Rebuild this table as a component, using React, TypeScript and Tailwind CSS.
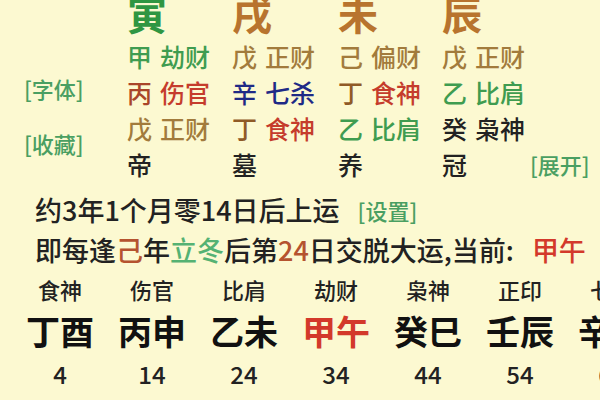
const G = "text-[#3f9c50]";
const B = "text-[#a27b3c]";
const BR = "text-[#8f5a27]";
const R = "text-[#c53c2c]";
const RB = "text-[#a9452a]";
const BL = "text-[#1f2a86]";
const K = "text-[#222222]";
const LINK = "text-[#4a9f62]";

type Cell = [string, string, string, string];

const pillars = [
  { zhi: "寅", color: "text-[#2f9642]", state: "帝" },
  { zhi: "戌", color: "text-[#b8742e]", state: "墓" },
  { zhi: "未", color: "text-[#b8742e]", state: "养" },
  { zhi: "辰", color: "text-[#b8742e]", state: "冠" },
];

const hidden: Cell[][] = [
  [
    ["甲", G, "劫财", G],
    ["戊", B, "正财", B],
    ["己", B, "偏财", B],
    ["戊", B, "正财", B],
  ],
  [
    ["丙", RB, "伤官", R],
    ["辛", BL, "七杀", BL],
    ["丁", BR, "食神", R],
    ["乙", G, "比肩", G],
  ],
  [
    ["戊", B, "正财", B],
    ["丁", BR, "食神", R],
    ["乙", G, "比肩", G],
    ["癸", K, "枭神", K],
  ],
];

const dayun = [
  { god: "食神", gz: "丁酉", age: 4 },
  { god: "伤官", gz: "丙申", age: 14 },
  { god: "比肩", gz: "乙未", age: 24 },
  { god: "劫财", gz: "甲午", age: 34, now: true },
  { god: "枭神", gz: "癸巳", age: 44 },
  { god: "正印", gz: "壬辰", age: 54 },
  { god: "七杀", gz: "辛卯", age: 64 },
];

const cols = "grid grid-cols-[105px_106px_104px_88px_1fr]";

export default function App() {
  return (
    <div className="h-[400px] w-[600px] overflow-hidden bg-[#fcf9d1] font-['Noto_Sans_CJK_SC',sans-serif] font-medium text-[#222222]">
      <div className="flex">
        <div className="flex w-[127px] shrink-0 flex-col pl-[24px] pt-[73px] text-[22px] leading-[30px]">
          <span className={LINK}>[字体]</span>
          <span className={`mt-[25px] ${LINK}`}>[收藏]</span>
        </div>

        <div className="flex-1">
          <div className={`${cols} mt-[-7px] h-[45px] text-[40px] font-bold leading-[40px]`}>
            {pillars.map((p) => (
              <span key={p.zhi} className={p.color}>
                {p.zhi}
              </span>
            ))}
          </div>

          {hidden.map((row, i) => (
            <div key={i} className={`${cols} h-[36px] text-[25px] leading-[36px]`}>
              {row.map(([gan, ganColor, shen, shenColor], j) => (
                <div key={j} className="flex gap-[8px]">
                  <span className={ganColor}>{gan}</span>
                  <span className={shenColor}>{shen}</span>
                </div>
              ))}
            </div>
          ))}

          <div className={`${cols} h-[37px] text-[25px] leading-[37px]`}>
            {pillars.map((p) => (
              <span key={p.state}>{p.state}</span>
            ))}
            <span className={`text-[22px] ${LINK}`}>[展开]</span>
          </div>
        </div>
      </div>

      <div className="mt-[7px] flex items-center pl-[35px] text-[27px] leading-[40px]">
        <span>约3年1个月零14日后上运</span>
        <span className={`ml-[18px] text-[22px] ${LINK}`}>[设置]</span>
      </div>

      <div className="flex items-center pl-[35px] text-[27px] leading-[40px]">
        <span>
          即每逢<span className="text-[#b5532f]">己</span>年
          <span className="text-[#55b273]">立冬</span>后第
          <span className="text-[#b5532f]">24</span>日交脱大运,当前:
          <span className="ml-[18px] text-[#d3392b]">甲午</span>
        </span>
      </div>

      <div className="mt-[-1px] flex pl-[14px]">
        {dayun.map((d) => (
          <div key={d.age} className="flex w-[92px] shrink-0 flex-col items-center">
            <span className="text-[22px] leading-[40px]">{d.god}</span>
            <span
              className={`text-[34px] font-bold leading-[44px] ${
                d.now ? "text-[#d3392b]" : "text-[#111111]"
              }`}
            >
              {d.gz}
            </span>
            <span className="text-[24px] leading-[42px]">{d.age}</span>
          </div>
        ))}
      </div>
    </div>
  );
}
